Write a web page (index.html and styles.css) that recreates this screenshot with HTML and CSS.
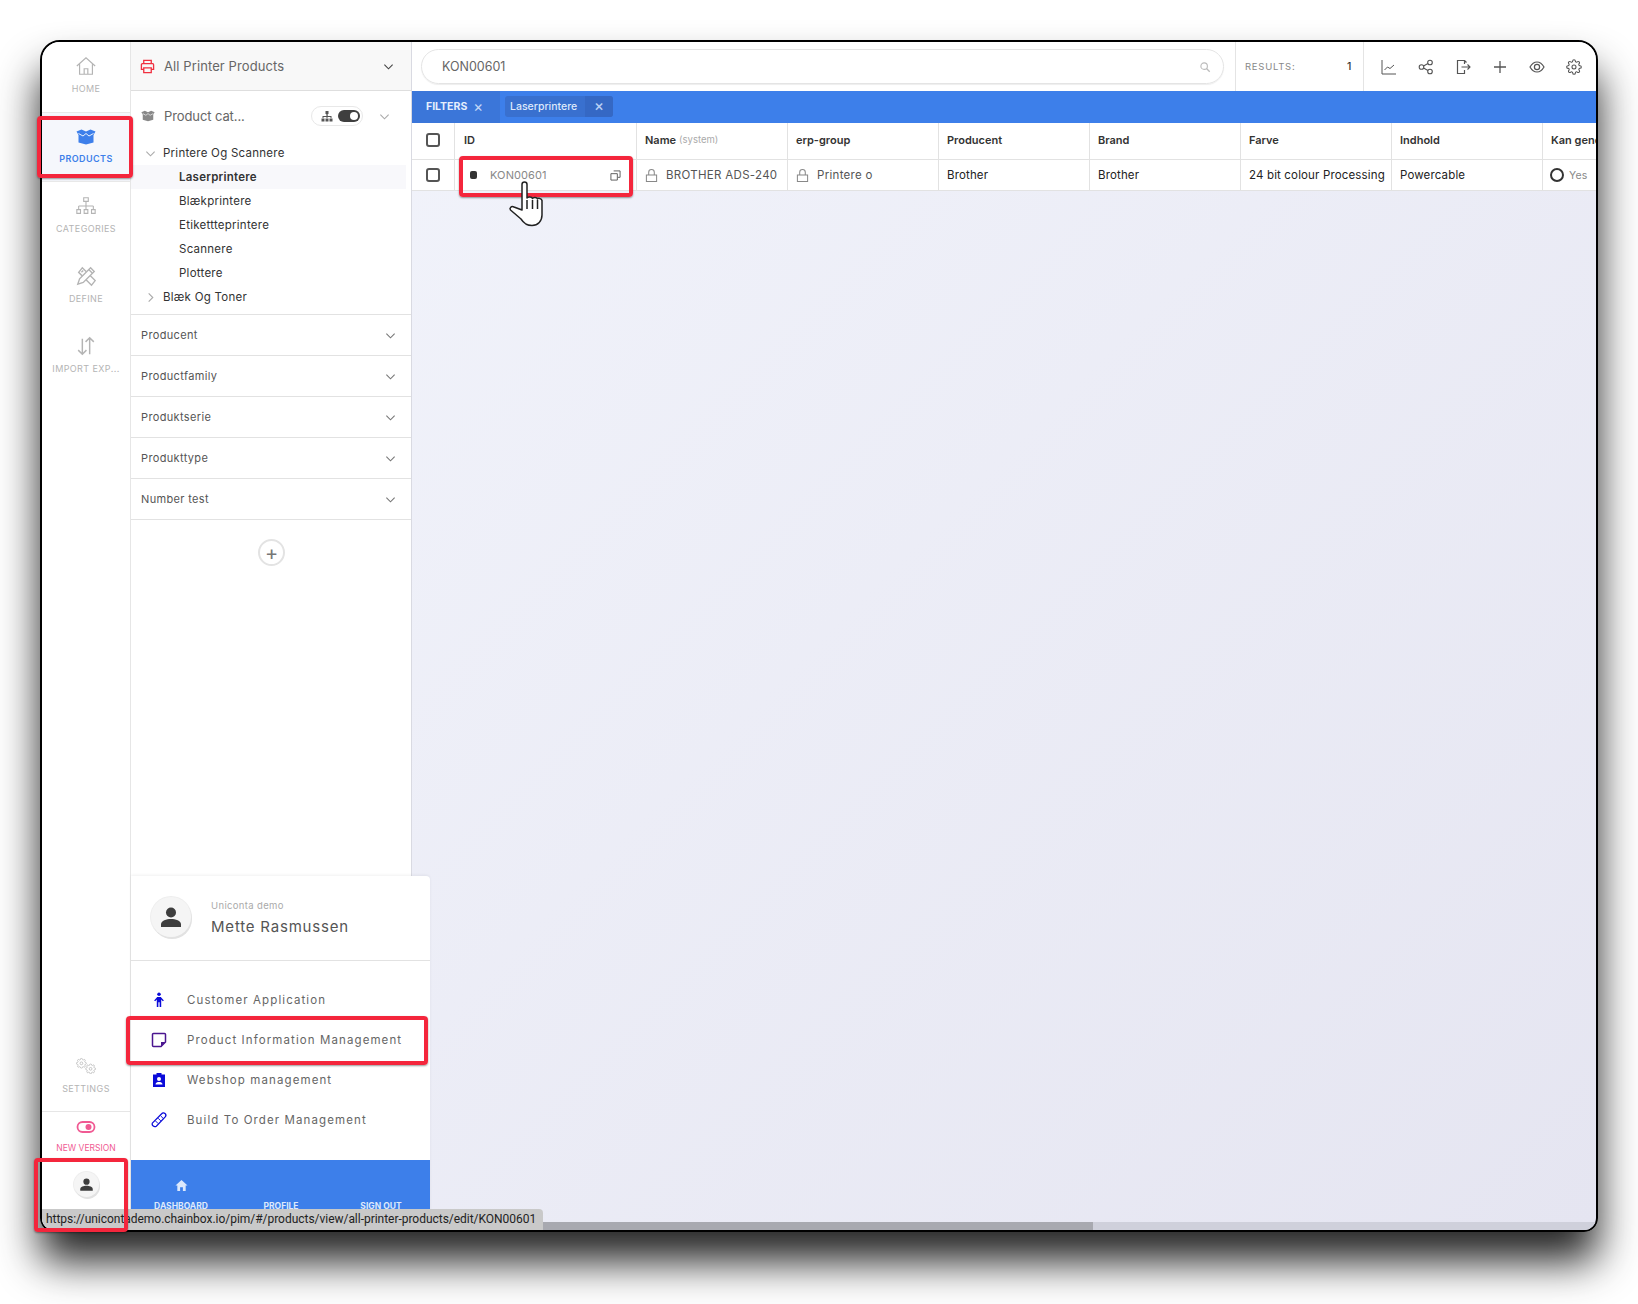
FILE: index.html
```html
<!DOCTYPE html>
<html lang="en">
<head>
<meta charset="utf-8">
<title>All Printer Products</title>
<link rel="stylesheet" href="styles.css">
</head>
<body>
<svg class="defs" width="0" height="0" aria-hidden="true">
  <symbol id="gear" viewBox="0 0 24 24"><path d="M12 15a3 3 0 1 0 0-6 3 3 0 0 0 0 6z M19.4 15a1.65 1.65 0 0 0 .33 1.82l.06.06a2 2 0 0 1 0 2.83 2 2 0 0 1-2.83 0l-.06-.06a1.65 1.65 0 0 0-1.82-.33 1.65 1.65 0 0 0-1 1.51V21a2 2 0 0 1-2 2 2 2 0 0 1-2-2v-.09A1.65 1.65 0 0 0 9 19.4a1.65 1.65 0 0 0-1.82.33l-.06.06a2 2 0 0 1-2.83 0 2 2 0 0 1 0-2.83l.06-.06a1.65 1.65 0 0 0 .33-1.82 1.65 1.65 0 0 0-1.51-1H3a2 2 0 0 1-2-2 2 2 0 0 1 2-2h.09A1.65 1.65 0 0 0 4.6 9a1.65 1.65 0 0 0-.33-1.82l-.06-.06a2 2 0 0 1 0-2.83 2 2 0 0 1 2.83 0l.06.06a1.65 1.65 0 0 0 1.82.33H9a1.65 1.65 0 0 0 1-1.51V3a2 2 0 0 1 2-2 2 2 0 0 1 2 2v.09a1.65 1.65 0 0 0 1 1.51 1.65 1.65 0 0 0 1.82-.33l.06-.06a2 2 0 0 1 2.83 0 2 2 0 0 1 0 2.83l-.06.06a1.65 1.65 0 0 0-.33 1.82V9a1.65 1.65 0 0 0 1.51 1H21a2 2 0 0 1 2 2 2 2 0 0 1-2 2h-.09a1.65 1.65 0 0 0-1.51 1z" fill="none" stroke="currentColor" stroke-width="1.6"/></symbol>
  <symbol id="chev" viewBox="0 0 12 12"><path d="M1.5 4l4.5 4.5L10.5 4" fill="none" stroke="currentColor" stroke-width="1.2"/></symbol>
  <symbol id="lock" viewBox="0 0 14 16"><path d="M1.5 7.5h11v7h-11zM4 7.5V4.5a3 3 0 0 1 6 0v3" fill="none" stroke="currentColor" stroke-width="1.1"/></symbol>
  <symbol id="person" viewBox="0 0 24 24"><circle cx="12" cy="7.5" r="5" fill="currentColor"/><path d="M2 22v-2.5C2 15.5 7.5 14 12 14s10 1.5 10 5.5V22z" fill="currentColor"/></symbol>
  <symbol id="box" viewBox="0 0 20 16"><path d="M.5 2.500L5.500.5 10 2.500l4.500-2 5 2L17.500 6v7.500L10 15.500l-7.500-2V6z" fill="currentColor"/><path d="M2.500 4.500l4.500 2.500 3-2.500 3 2.500 4.500-2.500" fill="none" stroke="#fff" stroke-width=".9"/></symbol>
</svg>

<div class="window">
  <nav class="rail">
    <a class="rail-item">
      <svg class="rail-icon" viewBox="0 0 24 24"><path d="M2 12L12 3l10 9M5 10v11h14V10M10 21v-6h4v6" fill="none" stroke="currentColor" stroke-width="1.3"/></svg>
      <span>HOME</span>
    </a>
    <a class="rail-item active">
      <svg class="rail-icon box-ic"><use href="#box"/></svg>
      <span>PRODUCTS</span>
    </a>
    <a class="rail-item">
      <svg class="rail-icon" viewBox="0 0 24 24"><path d="M9.500 3h5v4h-5zM12 7v5M4 12h16M4 12v4M12 12v4M20 12v4M2 16h4v4H2zM10 16h4v4h-4zM18 16h4v4h-4z" fill="none" stroke="currentColor" stroke-width="1.200"/></svg>
      <span>CATEGORIES</span>
    </a>
    <a class="rail-item">
      <svg class="rail-icon" viewBox="0 0 24 24"><path d="M4 8l4-5 14 14-4 5zM7 8l2-2M10 11l2-2M13 14l2-2" fill="none" stroke="currentColor" stroke-width="1.500"/><path d="M3 21l2-6L17 3l4 4L9 19z" fill="#fff" stroke="currentColor" stroke-width="1.500"/><path d="M15 5l4 4" stroke="currentColor" stroke-width="1.500"/></svg>
      <span>DEFINE</span>
    </a>
    <a class="rail-item">
      <svg class="rail-icon" viewBox="0 0 24 24"><path d="M8 4v17M3.500 16.500L8 21l4.500-4.500M16 21V3M11.500 7.500L16 3l4.500 4.500" fill="none" stroke="currentColor" stroke-width="1.600"/></svg>
      <span>IMPORT EXP...</span>
    </a>
    <div class="rail-bottom">
      <a class="rail-item settings">
        <svg class="rail-icon" viewBox="0 0 24 24"><svg x="1" y="2" width="12" height="12"><use href="#gear"/></svg><svg x="11" y="8" width="12" height="12"><use href="#gear"/></svg></svg>
        <span>SETTINGS</span>
      </a>
      <a class="rail-item version">
        <svg class="version-ic" viewBox="0 0 20 14"><rect x="1.500" y="2" width="17" height="10" rx="5" fill="none" stroke="currentColor" stroke-width="1.800"/><circle cx="12.500" cy="7" r="3" fill="currentColor"/></svg>
        <span>NEW VERSION</span>
      </a>
      <div class="rail-user"><span class="avatar small"><svg><use href="#person"/></svg></span></div>
    </div>
  </nav>

  <aside class="panel">
    <header class="panel-head">
      <svg class="printer" viewBox="0 0 16 16"><path d="M4 5V1.500h8V5M4 11H1.500V6a1 1 0 0 1 1-1h11a1 1 0 0 1 1 1v5H12M4 9.500h8v5H4z" fill="none" stroke="currentColor" stroke-width="1.400"/></svg>
      <span class="panel-title">All Printer Products</span>
      <svg class="chev dark"><use href="#chev"/></svg>
    </header>
    <div class="cat-row">
      <svg class="cat-box"><use href="#box"/></svg>
      <span class="cat-title">Product cat...</span>
      <span class="pill">
        <svg class="tree-ic" viewBox="0 0 12 12"><path d="M4.500 1h3v3h-3zM5.300 4h1.400v2H10.500v2H9.500V7h-3v1h-1V7h-3v1h-1V6h4z M.5 8.500h3v3h-3zM4.500 8.500h3v3h-3zM8.500 8.500h3v3h-3z" fill="currentColor"/></svg>
        <span class="switch"><i></i></span>
      </span>
      <svg class="chev light"><use href="#chev"/></svg>
    </div>
    <ul class="tree">
      <li class="tree-parent"><svg class="chev light"><use href="#chev"/></svg>Printere Og Scannere</li>
      <li class="tree-child current"><span>Laserprintere</span></li>
      <li class="tree-child"><span>Blækprintere</span></li>
      <li class="tree-child"><span>Etikettteprintere</span></li>
      <li class="tree-child"><span>Scannere</span></li>
      <li class="tree-child"><span>Plottere</span></li>
      <li class="tree-parent"><svg class="chev light closed"><use href="#chev"/></svg>Blæk Og Toner</li>
    </ul>
    <div class="acc"><span>Producent</span><svg class="chev"><use href="#chev"/></svg></div>
    <div class="acc"><span>Productfamily</span><svg class="chev"><use href="#chev"/></svg></div>
    <div class="acc"><span>Produktserie</span><svg class="chev"><use href="#chev"/></svg></div>
    <div class="acc"><span>Produkttype</span><svg class="chev"><use href="#chev"/></svg></div>
    <div class="acc"><span>Number test</span><svg class="chev"><use href="#chev"/></svg></div>
    <div class="add-wrap"><span class="add">+</span></div>
  </aside>

  <main class="main">
    <div class="topbar">
      <div class="search">
        <span>KON00601</span>
        <svg viewBox="0 0 14 14"><circle cx="6" cy="6" r="3.800" fill="none" stroke="currentColor" stroke-width="1.300"/><path d="M9 9l3.500 3.500" stroke="currentColor" stroke-width="1.500"/></svg>
      </div>
      <div class="results"><span>RESULTS:</span><b>1</b></div>
      <div class="tools">
        <svg viewBox="0 0 16 16"><path d="M1 1v14h14" fill="none" stroke="currentColor" stroke-width="1"/><path d="M3.500 11l3-3 2.500 1.500 4-3.500" fill="none" stroke="currentColor" stroke-width="1"/></svg>
        <svg viewBox="0 0 16 16"><circle cx="3.500" cy="8" r="2.300" fill="none" stroke="currentColor" stroke-width="1.100"/><circle cx="12" cy="3.500" r="2.300" fill="none" stroke="currentColor" stroke-width="1.100"/><circle cx="12" cy="12.500" r="2.300" fill="none" stroke="currentColor" stroke-width="1.100"/><path d="M5.500 7l4.500-2.500M5.500 9l4.500 2.500" stroke="currentColor" stroke-width="1.100"/></svg>
        <svg viewBox="0 0 16 16"><path d="M9.500 5V1.500H2.500v13h7V11M9.500 1.500l2 2" fill="none" stroke="currentColor" stroke-width="1.200"/><path d="M6.500 8h8.500M12.500 5.500L15 8l-2.500 2.500" fill="none" stroke="currentColor" stroke-width="1.100"/></svg>
        <svg viewBox="0 0 16 16"><path d="M8 2v12M2 8h12" stroke="currentColor" stroke-width="1.300"/></svg>
        <svg viewBox="0 0 16 16"><path d="M1 8c2-3.500 4.300-5 7-5s5 1.500 7 5c-2 3.500-4.300 5-7 5s-5-1.500-7-5z" fill="none" stroke="currentColor" stroke-width="1.200"/><circle cx="8" cy="8" r="2.600" fill="none" stroke="currentColor" stroke-width="1.200"/></svg>
        <svg viewBox="0 0 24 24"><use href="#gear"/></svg>
      </div>
    </div>
    <div class="filterbar">
      <div class="filters"><b>FILTERS</b><span class="x">×</span></div>
      <div class="chip"><span class="chip-label">Laserprintere</span><span class="chip-x">×</span></div>
    </div>
    <div class="table">
      <div class="cell head"><span class="check"></span></div>
      <div class="cell head idhead">ID</div>
      <div class="cell head">Name <small>(system)</small></div>
      <div class="cell head">erp-group</div>
      <div class="cell head">Producent</div>
      <div class="cell head">Brand</div>
      <div class="cell head">Farve</div>
      <div class="cell head">Indhold</div>
      <div class="cell head">Kan gendannes</div>

      <div class="cell"><span class="check"></span></div>
      <div class="cell idcell">
        <i class="dot"></i><span class="id">KON00601</span>
        <svg class="copy" viewBox="0 0 12 12"><path d="M4 1h7v7H8.500M1 4h7v7H1z" fill="none" stroke="currentColor" stroke-width="1"/></svg>
      </div>
      <div class="cell"><svg class="lock"><use href="#lock"/></svg><span class="soft">BROTHER ADS-240</span></div>
      <div class="cell"><svg class="lock"><use href="#lock"/></svg><span class="soft">Printere o</span></div>
      <div class="cell">Brother</div>
      <div class="cell">Brother</div>
      <div class="cell">24 bit colour Processing</div>
      <div class="cell">Powercable</div>
      <div class="cell yes"><i class="ring"></i><span>Yes</span></div>
    </div>
    <div class="scroll"><i></i></div>
  </main>

  <section class="usermenu">
    <div class="user-head">
      <span class="avatar"><svg><use href="#person"/></svg></span>
      <div class="user-text"><small>Uniconta demo</small><strong>Mette Rasmussen</strong></div>
    </div>
    <ul class="apps">
      <li><svg class="app-ic" viewBox="0 0 14 18"><circle cx="7" cy="2.500" r="2" fill="currentColor"/><path d="M1.500 9.500L5 5.500h4l3.500 4-1.200 1L9.500 8.500V17H7.700v-5.500H6.300V17H4.500V8.500l-1.800 2z" fill="currentColor"/></svg>Customer Application</li>
      <li><svg class="app-ic purple" viewBox="0 0 16 16"><path d="M2.500 1.500h11a1 1 0 0 1 1 1V10L10 14.500H2.500a1 1 0 0 1-1-1v-11a1 1 0 0 1 1-1z" fill="none" stroke="currentColor" stroke-width="1.500"/><path d="M14.500 10H10v4.500z" fill="currentColor"/></svg>Product Information Management</li>
      <li><svg class="app-ic" viewBox="0 0 14 16"><path d="M1 2.500h3.500V1h5v1.500H13V15H1z" fill="currentColor"/><circle cx="7" cy="7" r="2" fill="#fff"/><path d="M3.500 12.500c0-2 2-2.500 3.500-2.500s3.500.5 3.500 2.500z" fill="#fff"/></svg>Webshop management</li>
      <li><svg class="app-ic" viewBox="0 0 18 18"><path d="M1.500 12.500L12 2a2.500 2.500 0 0 1 4 3.500L6 16a3 3 0 0 1-4.500-3.500z" fill="none" stroke="currentColor" stroke-width="1.400"/><path d="M5 10l3 3M8 7l3 3M11 4.500l3 3" stroke="currentColor" stroke-width="1.100"/></svg>Build To Order Management</li>
    </ul>
    <div class="user-foot">
      <div class="foot-col"><svg viewBox="0 0 14 14"><path d="M7 1L.5 7H2.500v6h3V9h3v4h3V7h2z" fill="currentColor"/></svg><span>DASHBOARD</span></div>
      <div class="foot-col"><span>PROFILE</span></div>
      <div class="foot-col"><span>SIGN OUT</span></div>
    </div>
  </section>

  <div class="statusbar">https://unicontademo.chainbox.io/pim/#/products/view/all-printer-products/edit/KON00601</div>

  <i class="mark mark-products"></i>
  <i class="mark mark-user"></i>
  <i class="mark mark-app"></i>
  <i class="mark mark-id"></i>

  <svg class="hand" viewBox="0 0 36 48"><path d="M14 31V5.500a2.500 2.500 0 0 1 5 0V19c.500-1.500 5-1.500 5.500.5.500-1.500 4.500-1.500 5 .5.500-1 4-1 4.500 1.500V36c0 6-4 10.500-10 10.500-5.500 0-8-2-11-6.500L2.500 31c-1.500-2 1-4.500 3.500-3z" fill="#fff" stroke="#222" stroke-width="1.500" stroke-linejoin="round"/><path d="M19 21v9M24.500 21v9M29.500 21v9" stroke="#222" stroke-width="1.500"/></svg>
</div>
</body>
</html>
```

FILE: styles.css
```css
* { box-sizing: border-box; }
html, body { margin: 0; height: 100%; }
body {
  padding: 40px;
  background: #fff;
  font-family: Inter, "Liberation Sans", sans-serif;
  color: #333;
  overflow: hidden;
}
.defs { position: absolute; }
ul { list-style: none; margin: 0; padding: 0; }

.window {
  position: relative;
  display: flex;
  width: 1558px;
  height: 1192px;
  border: 2px solid #000;
  border-radius: 20px 20px 14px 14px;
  background: linear-gradient(135deg, #f3f5fc, #e5e5f1);
  box-shadow: 0 30px 42px rgba(0, 0, 0, .85);
}

/* rail */
.rail {
  flex: 0 0 89px;
  display: flex;
  flex-direction: column;
  background: #fff;
  border-right: 1px solid #e6e6e6;
  border-radius: 18px 0 0 12px;
}
.rail-item {
  height: 70px;
  display: flex;
  flex-direction: column;
  align-items: center;
  justify-content: flex-end;
  padding-bottom: 18px;
  color: #b4b4b4;
  font-size: 9px;
  letter-spacing: .4px;
}
.rail-icon { width: 22px; height: 22px; margin-bottom: 6px; }
.rail-item.active {
  height: 70px;
  padding-bottom: 17px;
  background: #f5f7fc;
  color: #3d7fea;
  font-weight: 600;
  border-top: 1px solid #e8e8e8;
  border-bottom: 1px solid #e8e8e8;
}
.box-ic { width: 20px; height: 16px; margin-bottom: 8px; }
.rail-bottom { margin-top: auto; }
.settings { height: 69px; padding-bottom: 17px; }
.settings .rail-icon { margin-bottom: 5px; }
.version {
  height: 47px;
  border-top: 1px solid #e6e6e6;
  color: #f05a93;
  padding-bottom: 5px;
  font-size: 8.500px;
  letter-spacing: 0;
}
.version-ic { width: 20px; height: 14px; margin-bottom: 9px; }
.rail-user {
  height: 72px;
  display: flex;
  justify-content: center;
  padding-top: 14px;
}
.avatar {
  width: 40px;
  height: 40px;
  flex: none;
  display: flex;
  align-items: center;
  justify-content: center;
  border-radius: 50%;
  background: #f5f5f5;
  box-shadow: 1px 2px 0 #e2e2e2, 0 0 0 1px #eee;
  color: #3e3e3e;
}
.avatar svg { width: 24px; height: 24px; }
.avatar.small { width: 25px; height: 25px; }
.avatar.small svg { width: 15px; height: 15px; }

/* panel */
.panel {
  flex: 0 0 281px;
  background: #fff;
  border-right: 1px solid #d9dae2;
}
.panel-head {
  height: 49px;
  display: flex;
  align-items: center;
  padding: 0 17px 0 9px;
  background: #f8f8f8;
  border-bottom: 1px solid #dedede;
}
.printer { width: 15px; height: 15px; color: #f03040; margin-right: 9px; flex: none; }
.panel-title { flex: 1; font-size: 13px; letter-spacing: .1px; color: #666; }
.chev { width: 11px; height: 11px; color: #777; flex: none; }
.chev.dark { color: #444; }
.chev.light { color: #aaa; }
.closed { transform: rotate(-90deg); }
.cat-row {
  height: 50px;
  display: flex;
  align-items: center;
  padding: 0 21px 0 10px;
}
.cat-box { width: 14px; height: 12px; color: #888; margin-right: 9px; flex: none; }
.cat-title { flex: 1; font-size: 13px; letter-spacing: -.1px; color: #666; }
.pill {
  width: 52px;
  height: 20px;
  display: flex;
  align-items: center;
  gap: 5px;
  padding-left: 9px;
  border: 1px solid #e8e8e8;
  border-radius: 10px;
  margin-right: 16px;
}
.tree-ic { width: 12px; height: 12px; color: #555; flex: none; }
.switch {
  position: relative;
  width: 22px;
  height: 12px;
  border-radius: 6px;
  background: #3f3f3f;
}
.switch i {
  position: absolute;
  right: 2px;
  top: 2px;
  width: 8px;
  height: 8px;
  border-radius: 50%;
  background: #fff;
}
.tree { height: 174px; padding-top: 0; border-bottom: 1px solid #e2e2e2; }
.tree li {
  height: 24px;
  display: flex;
  align-items: center;
  font-size: 11.500px;
  letter-spacing: .25px;
  color: #333;
}
.tree-parent { padding-left: 14px; gap: 7px; }
.tree-child { padding-left: 48px; }
.tree-child.current {
  width: 275px;
  background: #f8f8fb;
  font-weight: 600;
}
.acc {
  height: 41px;
  display: flex;
  align-items: center;
  justify-content: space-between;
  padding: 0 15px 0 10px;
  border-bottom: 1px solid #e2e2e2;
  font-size: 11px;
  letter-spacing: .35px;
  color: #555;
}
.add-wrap { display: flex; justify-content: center; padding-top: 19px; padding-left: 1px; }
.add {
  width: 27px;
  height: 27px;
  display: flex;
  align-items: center;
  justify-content: center;
  border: 2px solid #e3e3e3;
  border-radius: 50%;
  color: #777;
  font-size: 20px;
  line-height: 1;
}

/* main */
.main {
  flex: 1;
  min-width: 0;
  display: flex;
  flex-direction: column;
  overflow: hidden;
  border-radius: 0 18px 12px 0;
}
.topbar {
  height: 49px;
  display: flex;
  align-items: stretch;
  background: #fff;
}
.search {
  width: 803px;
  height: 35px;
  margin: 7px 11px 0 9px;
  display: flex;
  align-items: center;
  justify-content: space-between;
  padding: 0 12px 0 20px;
  border: 1px solid #e4e4e4;
  border-radius: 18px;
  box-shadow: 0 1px 1px #eee;
  font-size: 12.500px;
  letter-spacing: 0;
  color: #666;
}
.search svg { width: 12px; height: 12px; color: #bbb; }
.results {
  width: 129px;
  display: flex;
  align-items: center;
  justify-content: space-between;
  padding: 0 11px 0 9px;
  border-left: 1px solid #e4e4e4;
  border-right: 1px solid #e4e4e4;
  font-size: 9.500px;
  letter-spacing: .75px;
  color: #888;
}
.results b { font-weight: 500; font-size: 10.500px; color: #333; }
.tools {
  flex: 1;
  display: flex;
  align-items: center;
  gap: 21px;
  padding-left: 17px;
  color: #555;
}
.tools svg { width: 16px; height: 16px; flex: none; }
.filterbar {
  height: 32px;
  display: flex;
  align-items: stretch;
  background: #3d7fea;
  color: #fff;
}
.filters {
  width: 88px;
  display: flex;
  align-items: center;
  gap: 6px;
  padding: 0 0 2px 14px;
  background: #3b76d9;
  font-size: 10.500px;
  color: #e6effd;
}
.filters b { font-weight: 700; }
.x { color: #c4d8f8; font-size: 15px; line-height: 1; }
.chip {
  width: 108px;
  height: 21px;
  margin: 5px 0 0 5px;
  display: flex;
  border-radius: 3px;
  overflow: hidden;
  background: #3970cf;
  font-size: 10.500px;
  font-weight: 500;
  color: #dfe9fb;
}
.chip-label { width: 80px; padding-left: 5px; line-height: 21px; white-space: nowrap; }
.chip-x {
  flex: 1;
  background: #3568c4;
  text-align: center;
  color: #b9cff4;
  font-size: 15px;
  line-height: 20px;
}
.table {
  display: grid;
  grid-template-columns: 43px 182px repeat(7, 151px);
  grid-template-rows: 37px 31px;
  background: #fff;
  flex: none;
}
.cell {
  display: flex;
  align-items: center;
  gap: 8px;
  padding: 0 8px;
  overflow: hidden;
  border-right: 1px solid #e2e2e2;
  border-bottom: 1px solid #e2e2e2;
  font-size: 11.500px;
  letter-spacing: .15px;
  color: #222;
  white-space: nowrap;
}
.cell.head { font-size: 11px; font-weight: 600; letter-spacing: 0; color: #333; gap: 3px; padding-bottom: 3px; }
.cell.idhead { padding-left: 9px; }
.head small { font-size: 9.500px; font-weight: 400; color: #aaa; }
.check {
  width: 14px;
  height: 14px;
  flex: none;
  margin-left: 6px;
  border: 2px solid #555;
  border-radius: 3px;
}
.idcell { padding-left: 15px; }
.dot { width: 7px; height: 8px; border-radius: 2px; background: #333; flex: none; }
.id { margin-left: 5px; flex: 1; color: #888; font-size: 11px; letter-spacing: .1px; }
.copy { width: 11px; height: 11px; color: #555; margin-right: 7px; flex: none; }
.lock { width: 13px; height: 15px; color: #888; flex: none; }
.soft { color: #555; letter-spacing: .3px; }
.ring { width: 14px; height: 14px; flex: none; border: 2px solid #333; border-radius: 50%; margin-left: -1px; }
.yes span { color: #888; font-size: 10.500px; margin-left: -3px; }
.scroll {
  height: 8px;
  margin-top: auto;
  background: #cfd0db;
}
.scroll i {
  display: block;
  width: 681px;
  height: 100%;
  background: #a8a9b0;
}

/* overlay menu */
.usermenu {
  position: absolute;
  left: 89px;
  top: 834px;
  width: 299px;
  height: 354px;
  display: flex;
  flex-direction: column;
  background: #fff;
  border-radius: 0 4px 0 0;
  box-shadow: 0 -1px 3px rgba(0, 0, 0, .06);
  overflow: hidden;
}
.user-head {
  height: 85px;
  flex: none;
  display: flex;
  align-items: center;
  gap: 19px;
  padding: 0 0 3px 20px;
  border-bottom: 1px solid #e2e2e2;
}
.user-text { display: flex; flex-direction: column; gap: 6px; margin: 3px 0 0 1px; }
.user-text small { font-size: 9.500px; letter-spacing: .35px; color: #aaa; }
.user-text strong { font-size: 15px; font-weight: 400; letter-spacing: .8px; color: #555; }
.apps { padding-top: 19px; height: 199px; flex: none; }
.apps li {
  height: 40px;
  display: flex;
  align-items: center;
  gap: 20px;
  padding-left: 20px;
  font-size: 11.500px;
  letter-spacing: 1.1px;
  color: #666;
}
.app-ic { width: 16px; height: 16px; color: #0b0bd9; flex: none; }
.app-ic.purple { color: #4b1690; }
.user-foot {
  flex: 1;
  display: grid;
  grid-template-columns: repeat(3, 100px);
  background: #3d7fea;
  color: #dde9fc;
}
.foot-col {
  display: flex;
  flex-direction: column;
  align-items: center;
  justify-content: flex-end;
  gap: 9px;
  padding-bottom: 19px;
  font-size: 8.500px;
  font-weight: 700;
}
.foot-col svg { width: 13px; height: 13px; }

.statusbar {
  position: absolute;
  left: 0;
  bottom: 0;
  width: 501px;
  height: 21px;
  padding-left: 4px;
  background: #c9c9c9;
  border-radius: 0 4px 0 12px;
  font-family: Roboto, sans-serif;
  font-size: 12px;
  letter-spacing: -.03px;
  line-height: 21px;
  color: #222;
  white-space: nowrap;
  overflow: hidden;
}

/* annotation marks */
.mark {
  position: absolute;
  border: 4px solid #f4263c;
  border-radius: 4px;
  box-shadow: 0 1px 2px rgba(0, 0, 0, .4);
}
.mark-products { left: -5px; top: 74px; width: 96px; height: 62px; }
.mark-user { left: -8px; top: 1116px; width: 94px; height: 74px; }
.mark-app { left: 84px; top: 974px; width: 302px; height: 49px; }
.mark-id { left: 417px; top: 114px; width: 174px; height: 41px; }
.hand { position: absolute; left: 466px; top: 137px; width: 36px; height: 48px; }
```
